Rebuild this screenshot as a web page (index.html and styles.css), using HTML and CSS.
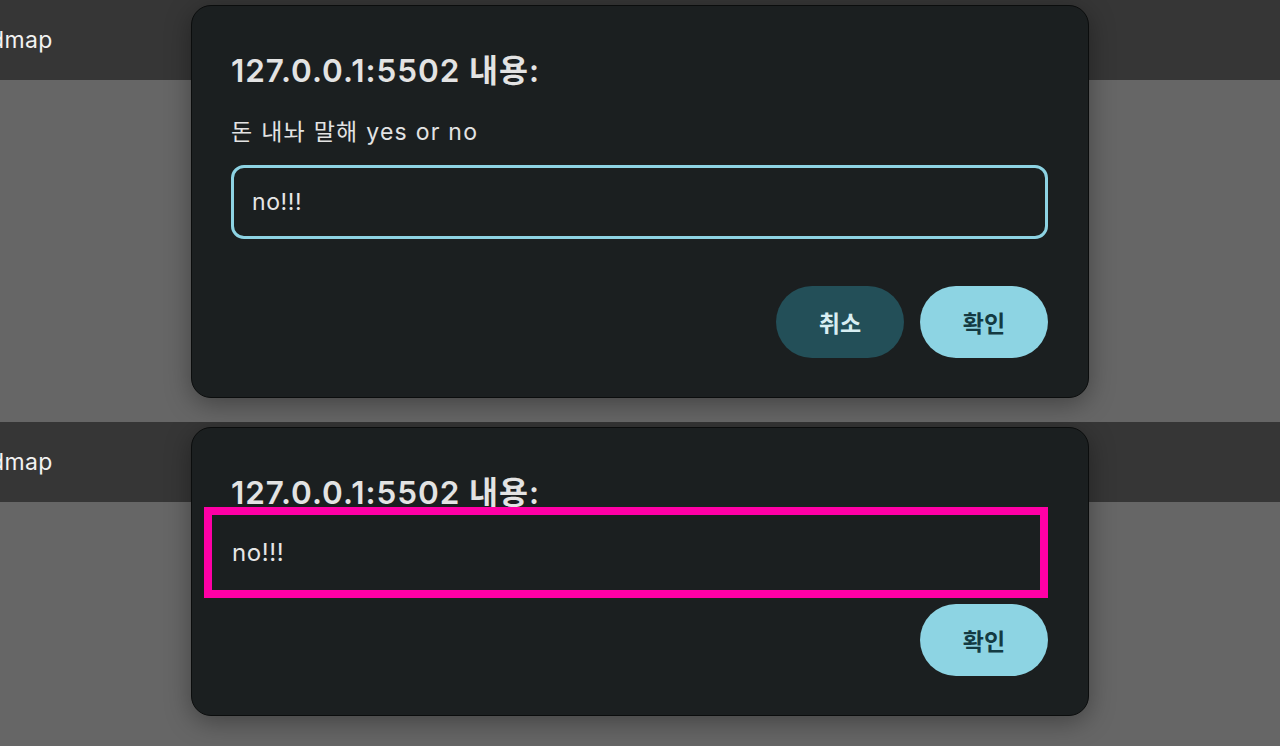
FILE: index.html
```html
<!DOCTYPE html>
<html lang="ko">
<head>
<meta charset="utf-8">
<title>prompt</title>
<link rel="stylesheet" href="styles.css">
</head>
<body>
<section class="panel panel-top">
  <header class="topbar"><span class="brand">dmap</span></header>
  <div class="dialog">
    <h2 class="title">127.0.0.1:5502 내용:</h2>
    <p class="message">돈 내놔 말해 yes or no</p>
    <div class="input">no!!!</div>
    <div class="actions">
      <button class="btn btn-cancel">취소</button>
      <button class="btn btn-ok">확인</button>
    </div>
  </div>
</section>
<section class="panel panel-bottom">
  <header class="topbar"><span class="brand">dmap</span></header>
  <div class="dialog dialog-alert">
    <h2 class="title">127.0.0.1:5502 내용:</h2>
    <p class="result">no!!!</p>
    <div class="actions actions-tight">
      <button class="btn btn-ok">확인</button>
    </div>
  </div>
</section>
</body>
</html>
```

FILE: styles.css
```css
* { box-sizing: border-box; }
html, body { margin: 0; padding: 0; }
body {
  width: 1280px;
  height: 746px;
  overflow: hidden;
  background: #666666;
  font-family: Inter, "Noto Sans CJK KR", sans-serif;
  color: #e3e3e3;
}
.panel {
  position: relative;
  background: #666666;
  overflow: hidden;
}
.panel-top { height: 422px; }
.panel-bottom { height: 324px; }
.topbar {
  height: 80px;
  background: #363636;
  display: flex;
  align-items: center;
}
.brand {
  margin-left: -10px;
  font-size: 23px;
  letter-spacing: 0.4px;
  color: #f2f2f2;
  line-height: 28px;
}
.dialog {
  position: absolute;
  top: 5px;
  left: 0;
  right: 0;
  margin: 0 auto;
  width: 898px;
  background: #1b1f20;
  border: 1px solid #0b0d0d;
  border-radius: 20px;
  box-shadow: 0 6px 26px rgba(0, 0, 0, 0.35);
  padding: 47px 40px 39px 39px;
  display: flex;
  flex-direction: column;
}
.title {
  margin: 0;
  font-size: 31.5px;
  letter-spacing: 0.95px;
  line-height: 36px;
  font-weight: 600;
  color: #e3e3e3;
}
.message {
  margin: 29px 0 0 0;
  font-size: 23px;
  letter-spacing: 1.25px;
  line-height: 28px;
  color: #e3e3e3;
}
.input {
  margin-top: 19px;
  height: 74px;
  border: 3px solid #8dd3e3;
  border-radius: 13px;
  padding: 0 18px;
  display: flex;
  align-items: center;
  font-size: 23px;
  letter-spacing: 0.6px;
  line-height: 28px;
  color: #e6e6e6;
}
.actions {
  margin-top: 47px;
  display: flex;
  justify-content: flex-end;
  gap: 16px;
}
.actions-tight { margin-top: 6px; }
.btn {
  width: 128px;
  height: 72px;
  border: none;
  border-radius: 36px;
  font-family: Inter, "Noto Sans CJK KR", sans-serif;
  font-size: 23px;
  font-weight: 600;
  padding: 0;
}
.btn-cancel {
  background: #234f58;
  color: #d8eef2;
}
.btn-ok {
  background: #8dd4e3;
  color: #143a42;
}
.result {
  margin: -4px 0 0 -27px;
  height: 91px;
  border: 8px solid #ff00a6;
  padding: 0 0 0 20px;
  display: flex;
  align-items: center;
  font-size: 24px;
  letter-spacing: 0.6px;
  line-height: 28px;
  color: #e6e6e6;
}
```
